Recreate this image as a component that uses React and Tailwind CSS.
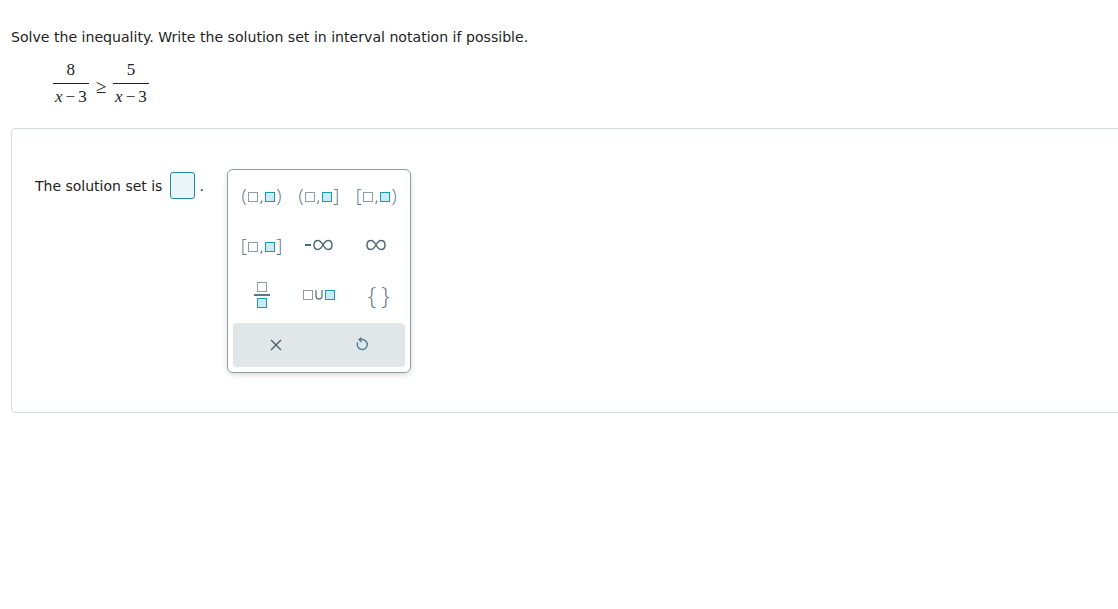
import React from "react";

const GrayBox = () => (
  <span className="inline-block w-[10px] h-[10px] border-[1.5px] border-[#8c9ea6] bg-white" />
);
const TealBox = () => (
  <span className="inline-block w-[10px] h-[10px] border-[1.5px] border-[#1a9ab0] bg-[#c9ecf3]" />
);

const Interval = ({ l, r }) => (
  <span className="inline-flex items-center text-[#5b7882] text-[19px] leading-none font-['Open_Sans'] font-light">
    <span>{l}</span>
    <span className="mx-[1px]"><GrayBox /></span>
    <span className="text-[14px] -mb-[4px] mx-[1px] font-normal">,</span>
    <span className="mx-[1px]"><TealBox /></span>
    <span>{r}</span>
  </span>
);

const Infinity_ = ({ neg }) => (
  <span className="inline-flex items-center">
    {neg && <span className="w-[6px] h-[2px] bg-[#4f6b75] mr-[2px]" />}
    <svg width="20" height="12" viewBox="0 0 20 12">
      <path d="M10 6 C8 2.5 6.5 1.5 5 1.5 C2.5 1.5 1 3.5 1 6 C1 8.5 2.5 10.5 5 10.5 C6.5 10.5 8 9.5 10 6 C12 2.5 13.5 1.5 15 1.5 C17.5 1.5 19 3.5 19 6 C19 8.5 17.5 10.5 15 10.5 C13.5 10.5 12 9.5 10 6 Z" fill="none" stroke="#4f6b75" strokeWidth="1.5" />
    </svg>
  </span>
);

const Cell = ({ children }) => (
  <div className="h-[50px] flex items-center justify-center">{children}</div>
);

const Frac = ({ num }) => (
  <span className="inline-flex flex-col items-center">
    <span className="leading-[20px] pb-[3px]">{num}</span>
    <span className="border-t border-[#222] px-[2px] leading-[20px] pt-[3px] whitespace-nowrap">
      <i>x</i><span className="mx-[3px]">−</span>3
    </span>
  </span>
);

export default function App() {
  return (
    <div className="w-[1118px] h-[609px] overflow-hidden bg-white font-['DejaVu_Sans',Verdana,sans-serif]">
      <div className="pl-[11px] pt-[28px] text-[14.1px] text-[#222] leading-[18px]">
        Solve the inequality. Write the solution set in interval notation if possible.
      </div>
      <div className="pl-[53px] pt-[14px] flex items-center text-[#222] text-[17px] font-['Liberation_Serif','DejaVu_Serif',serif]">
        <Frac num="8" />
        <span className="mx-[7px] text-[19px] mt-[6px] leading-none">≥</span>
        <Frac num="5" />
      </div>
      <div className="ml-[11px] mt-[21px] w-[1120px] h-[285px] border border-[#d3dcdc] rounded-[4px] pt-[40px] pl-[23px]">
        <div className="flex items-start">
          <span className="text-[14px] text-[#222] mt-[9px] leading-[16px]">The solution set is</span>
          <span className="ml-[8px] mt-[3px] w-[25px] h-[27px] border-[1.5px] border-[#1f8a99] rounded-[3px] bg-[#e8f5f9]" />
          <span className="ml-[4px] mt-[9px] text-[14px] leading-[16px] text-[#222]">.</span>
          <div className="ml-[23px] w-[184px] border border-[#8f9fa6] rounded-[6px] shadow-[0_2px_5px_rgba(0,0,0,0.15)] bg-white px-[5px] pb-[5px]">
            <div className="grid grid-cols-3">
              <Cell><Interval l="(" r=")" /></Cell>
              <Cell><Interval l="(" r="]" /></Cell>
              <Cell><Interval l="[" r=")" /></Cell>
              <Cell><Interval l="[" r="]" /></Cell>
              <Cell><Infinity_ neg /></Cell>
              <Cell><Infinity_ /></Cell>
              <Cell>
                <span className="flex flex-col items-center gap-[2px]">
                  <GrayBox />
                  <span className="w-[16px] h-[2px] bg-[#5b7882]" />
                  <TealBox />
                </span>
              </Cell>
              <Cell>
                <span className="flex items-center gap-[2px]">
                  <GrayBox />
                  <svg width="8" height="10" viewBox="0 0 8 10"><path d="M1 0 V6 A3 3 0 0 0 7 6 V0" fill="none" stroke="#5b7882" strokeWidth="1.3" /></svg>
                  <TealBox />
                </span>
              </Cell>
              <Cell>
                <span className="text-[24px] leading-none text-[#5b7882] tracking-[5px] pl-[10px] font-['Open_Sans'] font-light">{"{}"}</span>
              </Cell>
            </div>
            <div className="mt-[3px] h-[44px] bg-[#e1e6e9] rounded-[4px] grid grid-cols-2">
              <div className="flex items-center justify-center">
                <svg width="14" height="14" viewBox="0 0 14 14"><path d="M2 2 L12 12 M12 2 L2 12" stroke="#4a5f68" strokeWidth="1.4" /></svg>
              </div>
              <div className="flex items-center justify-center">
                <svg width="14" height="16" viewBox="0 0 14 16">
                  <path d="M4 2.5 L6 1 M4 2.5 L6 4.5 M4 2.5 H7 A5 5 0 1 1 2.5 6" fill="none" stroke="#4a7f8f" strokeWidth="1.4" strokeLinecap="round" />
                </svg>
              </div>
            </div>
          </div>
        </div>
      </div>
    </div>
  );
}
